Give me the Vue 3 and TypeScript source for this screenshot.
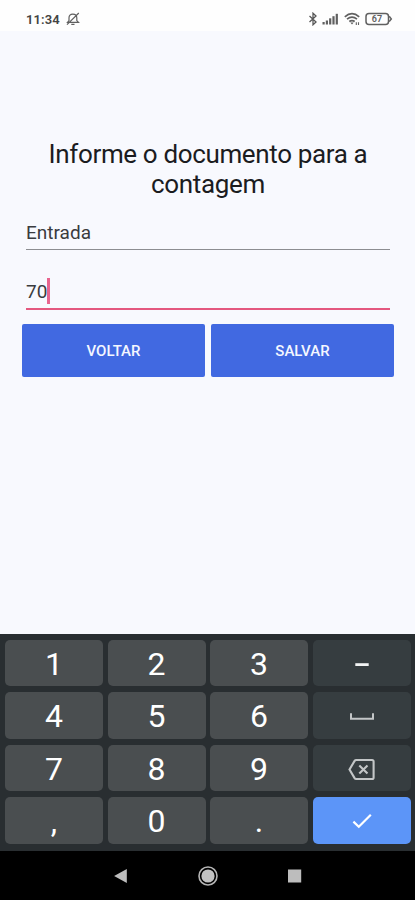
<script setup lang="ts">
import { ref } from 'vue'

type KeyKind = 'digit' | 'minus' | 'space' | 'delete' | 'enter'
interface Key {
  id: string
  kind: KeyKind
}

const documentType = ref<string>('Entrada')
const documentNumber = ref<string>('70')

const keys: Key[] = [
  { id: '1', kind: 'digit' },
  { id: '2', kind: 'digit' },
  { id: '3', kind: 'digit' },
  { id: '-', kind: 'minus' },
  { id: '4', kind: 'digit' },
  { id: '5', kind: 'digit' },
  { id: '6', kind: 'digit' },
  { id: ' ', kind: 'space' },
  { id: '7', kind: 'digit' },
  { id: '8', kind: 'digit' },
  { id: '9', kind: 'digit' },
  { id: 'delete', kind: 'delete' },
  { id: ',', kind: 'digit' },
  { id: '0', kind: 'digit' },
  { id: '.', kind: 'digit' },
  { id: 'enter', kind: 'enter' },
]

function press(key: Key): void {
  if (key.kind === 'delete') documentNumber.value = documentNumber.value.slice(0, -1)
  else if (key.kind !== 'enter') documentNumber.value += key.id
}
</script>

<template>
  <div class="phone">
    <header class="status">
      <div class="status-left">
        <span class="clock">11:34</span>
        <svg class="bell" width="14" height="14" viewBox="0 0 14 14" fill="none" stroke="#606060" stroke-width="1.2">
          <path d="M1.5 10.3L3 8.6V5.8Q3 2.2 6.8 2.2T10.8 5.8v2.8l1.7 1.7zM5.3 12.4h3.2M1 12.6L12.8 1" />
        </svg>
      </div>
      <div class="status-right">
        <svg width="10" height="14" viewBox="0 0 10 14" fill="none" stroke="#585858" stroke-width="1.3">
          <path d="M1.5 4L8 10 5 12.8V1.2L8 4 1.5 10" />
        </svg>
        <svg class="signal" width="17" height="12" viewBox="0 0 17 12" fill="#606060">
          <rect x="0.5" y="9" width="2.2" height="2.5" />
          <rect x="3.8" y="7.5" width="2.2" height="4" />
          <rect x="7.1" y="5.3" width="2.2" height="6.2" />
          <rect x="10.4" y="3.2" width="2.2" height="8.3" />
          <rect x="13.7" y="0.8" width="2.2" height="10.7" />
        </svg>
        <svg class="wifi" width="17" height="14" viewBox="0 0 17 14" fill="none" stroke="#606060" stroke-width="1.7">
          <path d="M.8 4.8Q8 -1.4 15.2 4.8M3 7.2Q8 3.2 13 7.2M5.3 9.5Q8 7.6 10.7 9.5" />
          <path d="M6.3 10.5h3.4L8 12.5z" fill="#606060" stroke="none" />
          <path d="M12.3 10.2v2.8M14.5 10.2v2.8" stroke-width="1.1" />
        </svg>
        <div class="battery">
          <svg width="28" height="14" viewBox="0 0 28 14" fill="none" stroke="#606060" stroke-width="1.5">
            <rect x="1" y="1.4" width="22.5" height="11" rx="3" />
            <path d="M24.2 4.2L26.3 6.9L24.2 9.6" />
          </svg>
          <span class="battery-level">67</span>
        </div>
      </div>
    </header>

    <main class="content">
      <h1 class="title">Informe o documento para a contagem</h1>
      <div class="field">{{ documentType }}</div>
      <div class="field focused">
        <span class="value">{{ documentNumber }}</span><i class="caret"></i>
      </div>
      <div class="actions">
        <button class="action" type="button">VOLTAR</button>
        <button class="action" type="button">SALVAR</button>
      </div>
    </main>

    <section class="keyboard">
      <button
        v-for="key in keys"
        :key="key.id"
        type="button"
        class="key"
        :class="key.kind"
        @click="press(key)"
      >
        <span v-if="key.kind === 'digit'">{{ key.id }}</span>
        <svg v-else-if="key.kind === 'minus'" width="30" height="24" viewBox="0 0 30 24">
          <path d="M8.3 12.6h13.4" stroke="#f2f3f3" stroke-width="2.8" />
        </svg>
        <svg v-else-if="key.kind === 'space'" width="30" height="24" viewBox="0 0 30 24" fill="none">
          <path d="M4 9.2v5.6h22V9.2" stroke="#c3c6c7" stroke-width="2" />
        </svg>
        <svg v-else-if="key.kind === 'delete'" width="30" height="24" viewBox="0 0 30 24" fill="none" stroke="#c3c6c7" stroke-width="2.1">
          <path d="M9.2 3H25a1.6 1.6 0 0 1 1.6 1.6v15.8A1.6 1.6 0 0 1 25 22H9.2a2 2 0 0 1-1.6-.9L2.5 12.5l5.1-8.6A2 2 0 0 1 9.2 3z" />
          <path d="M12.3 8.4l8.2 8.2M20.5 8.4l-8.2 8.2" />
        </svg>
        <svg v-else width="30" height="24" viewBox="0 0 30 24" fill="none">
          <path d="M6.4 12.6l5.4 5.2L23.8 5.8" stroke="#fff" stroke-width="2.2" />
        </svg>
      </button>
    </section>

    <nav class="navbar">
      <svg width="16" height="16" viewBox="0 0 16 16"><path d="M2.1 8L14.8 1v14z" fill="#bdbdbd" /></svg>
      <svg width="22" height="22" viewBox="0 0 22 22">
        <circle cx="11" cy="11" r="9" fill="none" stroke="#b5b5b5" stroke-width="1.6" />
        <circle cx="11" cy="11" r="6.6" fill="#c2c2c2" />
      </svg>
      <svg width="14" height="14" viewBox="0 0 14 14"><rect x="0" y="0.5" width="13.2" height="13" fill="#bdbdbd" /></svg>
    </nav>
  </div>
</template>

<style>
body {
  margin: 0;
}
</style>

<style scoped>
.phone {
  display: flex;
  flex-direction: column;
  width: 415px;
  height: 900px;
  overflow: hidden;
  background: #f8f9fe;
  font-family: Roboto, 'Liberation Sans', sans-serif;
}
.status {
  box-sizing: border-box;
  display: flex;
  justify-content: space-between;
  height: 31px;
  padding: 7px 22px 0 26px;
  background: #fefefe;
}
.status-left,
.status-right {
  display: flex;
  align-items: center;
  height: 24px;
}
.clock {
  font-size: 13px;
  font-weight: 600;
  letter-spacing: 0.1px;
  color: #444;
}
.bell {
  margin-left: 6.5px;
}
.signal {
  margin-left: 4px;
}
.wifi {
  margin-left: 5px;
}
.battery {
  display: grid;
  margin-left: 4px;
}
.battery svg,
.battery-level {
  grid-area: 1 / 1;
}
.battery-level {
  width: 24px;
  text-align: center;
  font-size: 9px;
  font-weight: 600;
  line-height: 14px;
  color: #606060;
}
.content {
  flex: 1;
  padding: 108px 21px 0 22px;
}
.title {
  margin: 0;
  text-align: center;
  font-size: 26px;
  font-weight: 400;
  line-height: 30px;
  letter-spacing: -0.36px;
  color: #1b1c1f;
}
.field {
  box-sizing: border-box;
  display: flex;
  align-items: center;
  height: 34px;
  margin: 17px 4px 0;
  border-bottom: 1px solid #8c8d91;
  font-size: 19px;
  color: #3a3b3e;
}
.field.focused {
  height: 36px;
  margin-top: 24px;
  padding-bottom: 1px;
  border-bottom: 2px solid #e4587f;
}
.value {
  padding-top: 2px;
}
.caret {
  width: 2.5px;
  height: 26px;
  background: #e8648e;
}
.actions {
  display: grid;
  grid-template-columns: 1fr 1fr;
  gap: 6px;
  margin-top: 14px;
}
.action {
  height: 53px;
  padding: 0;
  border: 0;
  border-radius: 2px;
  background: #4169e1;
  color: #f4f7ff;
  font-family: inherit;
  font-size: 15px;
  font-weight: 500;
}
.keyboard {
  box-sizing: border-box;
  display: grid;
  grid-template-columns: repeat(4, 1fr);
  grid-template-rows: repeat(4, 46.5px);
  gap: 6px 4.5px;
  height: 217.5px;
  padding: 6px 4.5px 0 5px;
  background: #292e31;
}
.key {
  display: flex;
  align-items: center;
  justify-content: center;
  padding: 2px 0 0;
  border: 0;
  border-radius: 5px;
  background: #363d40;
  color: #fff;
  font-family: inherit;
  font-size: 32px;
}
.key.digit {
  background: #4a4e50;
}
.key.enter {
  background: #5c95f8;
}
.navbar {
  display: flex;
  align-items: center;
  justify-content: center;
  gap: 69px;
  height: 49px;
  padding-right: 2px;
  background: #000;
}
</style>
